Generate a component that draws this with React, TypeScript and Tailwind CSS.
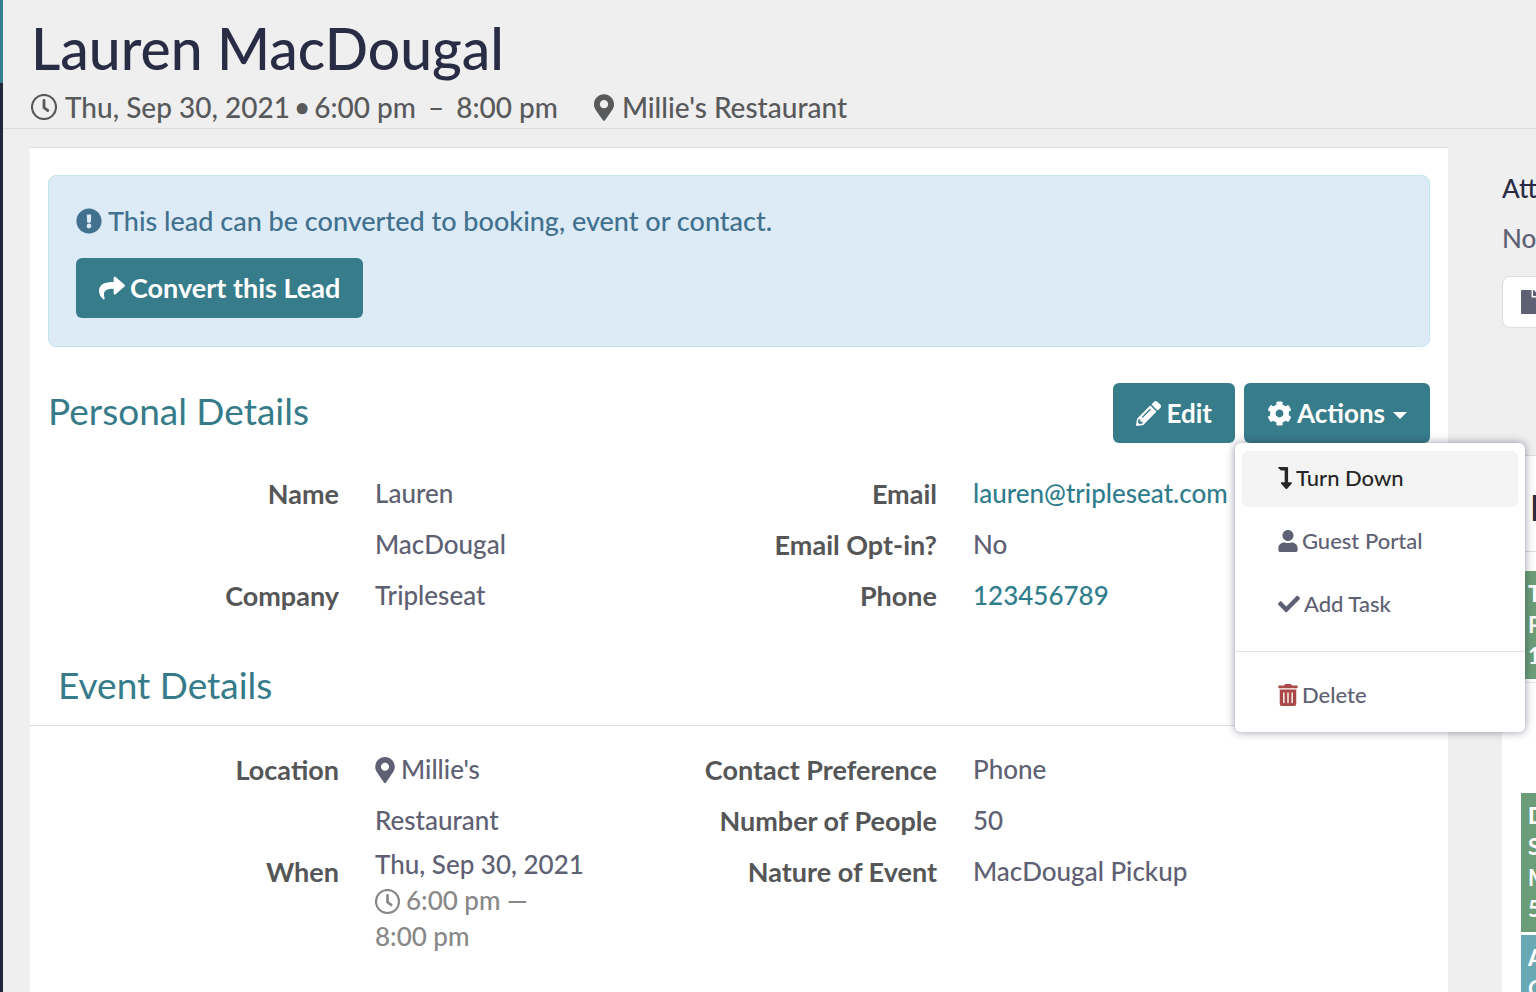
import React, { useState } from 'react';
import {
  FaCheck,
  FaCog,
  FaExclamationCircle,
  FaFile,
  FaLevelDownAlt,
  FaMapMarkerAlt,
  FaPencilAlt,
  FaShare,
  FaTrashAlt,
  FaUser,
} from 'react-icons/fa';

const ClockIcon = ({ className }: { className?: string }) => (
  <svg viewBox="0 0 26 26" className={className} fill="none" stroke="currentColor">
    <circle cx="13" cy="13" r="12" strokeWidth="2.2" />
    <path d="M13 6.5v7.2l3.8 2.8" strokeWidth="2.8" strokeLinecap="round" strokeLinejoin="round" />
  </svg>
);

const Field = ({ label, children }: { label: string; children: React.ReactNode }) => (
  <>
    <dt className="text-right text-[27px] font-bold text-[#555657]">{label}</dt>
    <dd>{children}</dd>
  </>
);

const primaryButton =
  'flex h-[60px] items-center gap-[5px] rounded-md bg-[#377c8b] px-[23px] font-bold text-white';
const menuItem = 'flex h-14 w-full items-center gap-1 rounded-md pb-[3px] pl-9';

const ActionsMenu = () => (
  <div className="absolute top-full -right-[95px] z-10 w-[290px] rounded-md bg-white py-2 text-[22px] shadow-[0_0_8px_rgba(40,45,70,0.5)]">
    <div className="flex flex-col gap-[7px] px-[7px]">
      <button className={`${menuItem} bg-[#f4f4f4] text-[#262626]`}>
        <FaLevelDownAlt className="h-[22px] w-[14px]" />
        Turn Down
      </button>
      <button className={menuItem}>
        <FaUser className="h-[22px] w-5" />
        Guest Portal
      </button>
      <button className={menuItem}>
        <FaCheck className="size-[22px]" />
        Add Task
      </button>
    </div>
    <hr className="mt-[18px] mb-4 border-[#e2e2e4]" />
    <div className="px-[7px]">
      <button className={menuItem}>
        <FaTrashAlt className="h-[22px] w-5 text-[#a94a48]" />
        Delete
      </button>
    </div>
  </div>
);

const EventCard = ({ title, lines, color }: { title: string; lines: string[]; color: string }) => (
  <div className={`ml-[19px] px-[7px] pt-[7px] pb-2 text-[22px] leading-[31px] text-white ${color}`}>
    <p className="font-black">{title}</p>
    {lines.map((l) => (
      <p key={l} className="font-bold">{l}</p>
    ))}
  </div>
);

const App = () => {
  const [open, setOpen] = useState(true);

  return (
    <div className="flex h-screen overflow-hidden bg-[#efefef] font-['Lato',sans-serif] text-[26px] font-medium text-[#5e6073]">
      <div className="w-[3px] shrink-0 bg-[#24263b]">
        <div className="h-[83px] bg-[#34808e]" />
      </div>

      <div className="flex min-w-0 flex-1 flex-col">
        <header className="h-[129px] shrink-0 border-b border-[#dcdde2] pt-[15px] pl-7">
          <h1 className="text-[57px] leading-[66px] text-[#282c44]">Lauren MacDougal</h1>
          <div className="mt-2 flex items-center gap-9 text-[28px] leading-9 text-[#58595b]">
            <div className="flex items-center gap-2">
              <ClockIcon className="size-[26px]" />
              <div className="flex gap-1">
                <span>Thu, Sep 30, 2021</span>
                <span>•</span>
                <span className="flex gap-3">
                  <span>6:00 pm</span>
                  <span>–</span>
                  <span>8:00 pm</span>
                </span>
              </div>
            </div>
            <div className="flex items-center gap-2">
              <FaMapMarkerAlt className="h-[27px] w-5" />
              Millie's Restaurant
            </div>
          </div>
        </header>

        <div className="flex min-h-0 flex-1 gap-[54px] pl-[27px]">
          <main className="mt-[18px] min-w-0 flex-1 border-t border-[#dddddd] bg-white pt-[27px]">
            <div className="mx-[18px] rounded-lg border border-[#c4e5ef] bg-[#dcebf5] p-[27px] pb-7 text-[27px]">
              <p className="flex items-center gap-[6px] leading-9 text-[#42708f]">
                <FaExclamationCircle className="size-[26px]" />
                This lead can be converted to booking, event or contact.
              </p>
              <button className={`mt-[19px] ${primaryButton}`}>
                <FaShare className="size-[26px]" />
                Convert this Lead
              </button>
            </div>

            <div className="mx-[18px] mt-9 flex items-start justify-between">
              <h2 className="text-[37px] leading-[56px] font-normal text-[#367b89]">Personal Details</h2>
              <div className="flex gap-[9px]">
                <button className={primaryButton}>
                  <FaPencilAlt className="size-[25px]" />
                  Edit
                </button>
                <div className="relative">
                  <button onClick={() => setOpen(!open)} className={primaryButton}>
                    <FaCog className="size-[25px]" />
                    Actions
                    <span className="mt-1 ml-[3px] border-x-[7px] border-t-[7px] border-x-transparent border-t-white" />
                  </button>
                  {open && <ActionsMenu />}
                </div>
              </div>
            </div>

            <div className="mt-[25px] grid grid-cols-[555fr_827fr] gap-9 leading-[51px]">
              <dl className="grid grid-cols-[309fr_210fr] content-start gap-x-9">
                <Field label="Name">Lauren MacDougal</Field>
                <Field label="Company">Tripleseat</Field>
              </dl>
              <dl className="grid grid-cols-[316fr_475fr] content-start gap-x-9">
                <Field label="Email">
                  <a href="mailto:lauren@tripleseat.com" className="text-[#2f7d8c]">lauren@tripleseat.com</a>
                </Field>
                <Field label="Email Opt-in?">No</Field>
                <Field label="Phone">
                  <a href="tel:123456789" className="text-[#2f7d8c]">123456789</a>
                </Field>
              </dl>
            </div>

            <h2 className="mt-[34px] border-b border-[#dddee0] pb-[10px] pl-7 text-[37px] leading-[60px] font-normal text-[#367b89]">
              Event Details
            </h2>

            <div className="mt-[18px] grid grid-cols-[555fr_827fr] gap-9 leading-[51px]">
              <dl className="grid grid-cols-[309fr_210fr] content-start gap-x-9">
                <Field label="Location">
                  <FaMapMarkerAlt className="mr-[6px] mb-1 inline h-[26px] w-5" />
                  Millie's Restaurant
                </Field>
                <Field label="When">
                  <div className="leading-9">
                    Thu, Sep 30, 2021
                    <div className="text-[#888888]">
                      <ClockIcon className="mr-[6px] mb-1 inline size-[25px]" />
                      6:00 pm — <span className="whitespace-nowrap">8:00 pm</span>
                    </div>
                  </div>
                </Field>
              </dl>
              <dl className="grid grid-cols-[316fr_475fr] content-start gap-x-9">
                <Field label="Contact Preference">Phone</Field>
                <Field label="Number of People">50</Field>
                <Field label="Nature of Event">MacDougal Pickup</Field>
              </dl>
            </div>
          </main>

          <aside className="w-[34px] shrink-0 overflow-hidden pt-10">
            <h3 className="leading-[38px] text-[#282c44]">Att</h3>
            <p className="mt-3 leading-[38px]">No</p>
            <button aria-label="Add file" className="mt-[19px] flex h-[52px] w-40 items-center rounded-lg border border-[#dddddd] bg-white pl-[18px]">
              <FaFile className="h-6 w-[18px]" />
            </button>
            <section className="mt-[127px] h-full w-80 border-t border-[#dddddd] bg-white">
              <h3 className="border-b border-[#dddddd] pt-[29px] pb-[22px] pl-7 text-[36px] leading-[44px] font-bold text-[#282c44]">E</h3>
              <div className="mt-[19px] border-b border-[#e8e8e8] pb-[3px]">
                <EventCard title="T" lines={['P', '1']} color="bg-[#6b9e78]" />
              </div>
              <div className="mt-[110px] flex flex-col gap-[3px]">
                <EventCard title="D" lines={['S', 'M', '5']} color="bg-[#6b9e78]" />
                <EventCard title="A" lines={['C']} color="bg-[#68a9b3]" />
              </div>
            </section>
          </aside>
        </div>
      </div>
    </div>
  );
};

export default App;
